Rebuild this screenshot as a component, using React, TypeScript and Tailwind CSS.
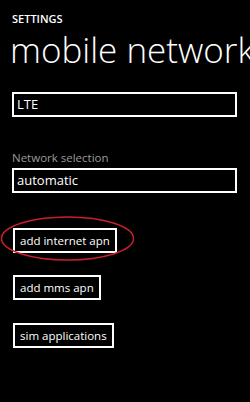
export default function App() {
  const buttons = [
    { label: 'add internet apn', mt: 'mt-[35px]' },
    { label: 'add mms apn', mt: 'mt-[22px]' },
    { label: 'sim applications', mt: 'mt-[23px]' },
  ];

  return (
    <div className="relative w-[250px] h-[402px] overflow-hidden bg-black text-white font-['Open_Sans',sans-serif]">
      {/* Header */}
      <div className="pl-3 pt-[13px] text-[11px] font-semibold leading-[12px]">SETTINGS</div>
      <div className="mt-[6px] pl-[10px] text-[35px] font-light leading-[37px] whitespace-nowrap">
        mobile network
      </div>

      {/* Network type */}
      <div className="ml-3 mt-[24px] w-[225px] h-[25px] border-2 border-white flex items-center pl-[3px] text-[13px]">
        LTE
      </div>

      {/* Network selection */}
      <div className="mt-[34px] pl-3 text-[11.5px] leading-[14px] text-[#9a9a9a]">Network selection</div>
      <div className="ml-3 mt-[3px] w-[225px] h-[25px] border-2 border-white flex items-center pl-[3px] text-[13px]">
        automatic
      </div>

      {/* Buttons */}
      <div className="flex flex-col items-start pl-[13px]">
        {buttons.map(b => (
          <div
            key={b.label}
            className={`${b.mt} h-[25px] border-2 border-white flex items-center px-[5px] text-[11.5px] font-medium`}
          >
            {b.label}
          </div>
        ))}
      </div>

      {/* Red annotation ellipse */}
      <svg className="absolute left-0 top-0" width="250" height="402" viewBox="0 0 250 402" fill="none">
        <ellipse cx="67.5" cy="238.5" rx="66" ry="21.5" stroke="#c8202a" strokeWidth="1.5" />
      </svg>
    </div>
  );
}
